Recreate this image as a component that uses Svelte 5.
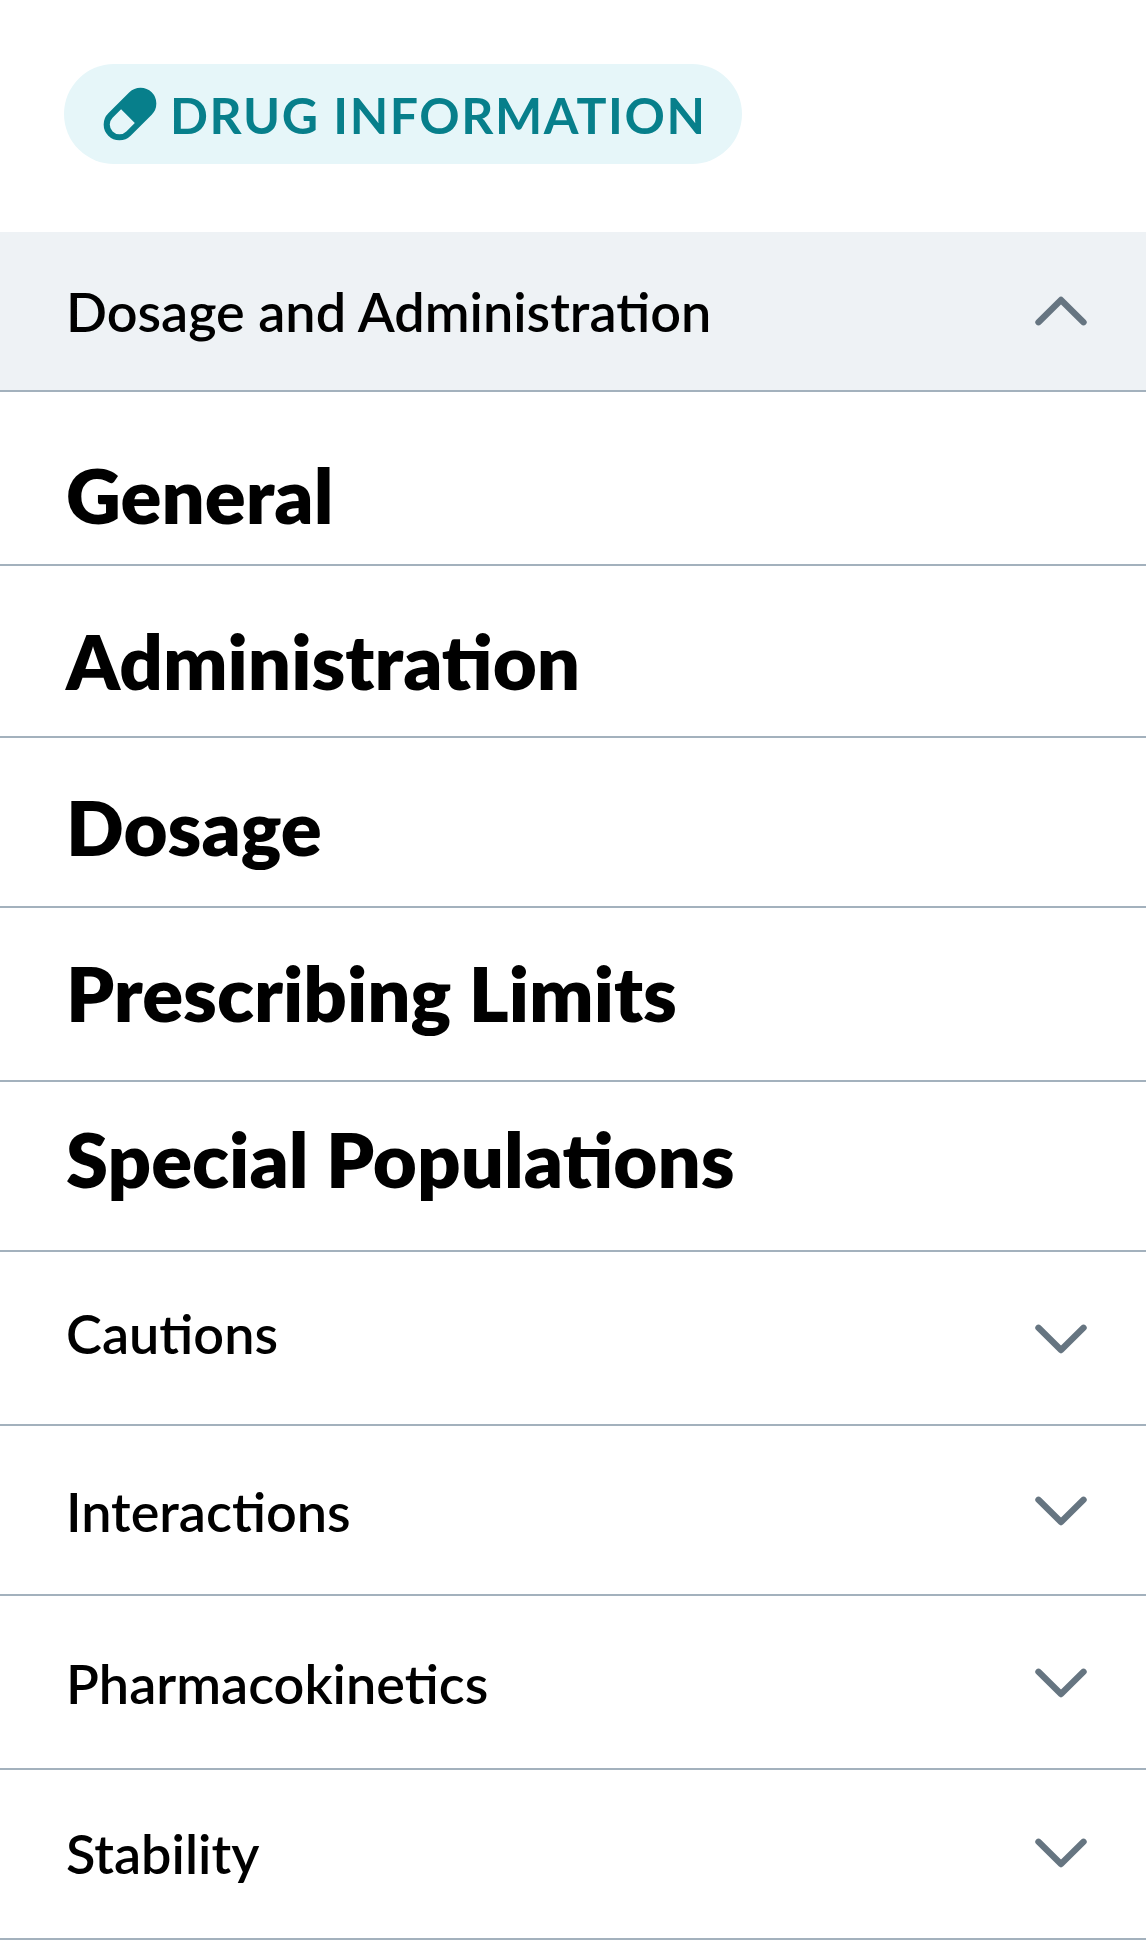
<script>
  let open = $state(true)

  // height: row height, top: label inset, icon: chevron inset
  const sections = [
    { label: 'General', height: 174, top: 56 },
    { label: 'Administration', height: 172, top: 48 },
    { label: 'Dosage', height: 170, top: 42 },
    { label: 'Prescribing Limits', height: 174, top: 38 },
    { label: 'Special Populations', height: 170, top: 30 }
  ]

  const topics = [
    { label: 'Cautions', height: 174, top: 50, icon: 71 },
    { label: 'Interactions', height: 170, top: 54, icon: 69 },
    { label: 'Pharmacokinetics', height: 174, top: 56, icon: 71 },
    { label: 'Stability', height: 170, top: 52, icon: 67 }
  ]
</script>

<main>
  <header>
    <div class="badge">
      <svg class="pill" viewBox="0 0 54 54">
        <path
          transform="rotate(45 27 27)"
          fill-rule="evenodd"
          d="M11.2 12.1a15.8 15.8 0 0 1 31.6 0v29.8a15.8 15.8 0 0 1-31.6 0zM17.3 29.9v12a9.7 9.7 0 0 0 19.4 0v-12z"
        />
      </svg>
      <span>DRUG INFORMATION</span>
    </div>
  </header>

  <button class="row active" onclick={() => (open = !open)}>
    <span class="label">Dosage and Administration</span>
    <svg class="chevron" class:flip={open} viewBox="0 0 54 32">
      <path d="M4.5 4.8 27 27 49.5 4.8" />
    </svg>
  </button>

  {#if open}
    {#each sections as section}
      <div class="row" style="height: {section.height}px; padding-top: {section.top}px">
        <h2>{section.label}</h2>
      </div>
    {/each}
  {/if}

  {#each topics as topic}
    <button class="row" style="height: {topic.height}px; padding-top: {topic.top}px">
      <span class="label">{topic.label}</span>
      <svg class="chevron" viewBox="0 0 54 32" style="margin-top: {topic.icon - topic.top}px">
        <path d="M4.5 4.8 27 27 49.5 4.8" />
      </svg>
    </button>
  {/each}
</main>

<style>
  :global(body) {
    margin: 0;
    background: #fff;
  }

  main {
    width: 1146px;
    height: 1940px;
    overflow: hidden;
    color: #000;
    font-family: Lato, sans-serif;
  }

  header {
    box-sizing: border-box;
    height: 232px;
    padding: 64px;
  }

  .badge {
    box-sizing: border-box;
    display: flex;
    align-items: center;
    width: 678px;
    height: 100px;
    padding-left: 39px;
    border-radius: 50px;
    background: #e6f6f9;
    color: #077f8b;
    font-size: 50px;
    font-weight: 700;
    letter-spacing: 1.56px;
    line-height: 60px;
    white-space: nowrap;
  }

  .badge span {
    margin-left: 13px;
    padding-top: 1px;
  }

  .pill {
    width: 54px;
    height: 54px;
    fill: currentColor;
  }

  .row {
    box-sizing: border-box;
    display: flex;
    align-items: flex-start;
    justify-content: space-between;
    width: 100%;
    margin: 0;
    padding: 0 58px 0 66px;
    border: none;
    border-bottom: 2px solid #a3b1bd;
    background: none;
    color: inherit;
    font-family: inherit;
    text-align: left;
  }

  .active {
    align-items: center;
    height: 160px;
    background: #eef2f5;
  }

  .active .label {
    padding-top: 2px;
  }

  .label {
    font-size: 54px;
    font-weight: 600;
    line-height: 64px;
    white-space: nowrap;
  }

  h2 {
    margin: 0;
    font-size: 76px;
    font-weight: 800;
    line-height: 94px;
    white-space: nowrap;
  }

  .chevron {
    width: 54px;
    height: 32px;
    fill: none;
    stroke: #667581;
    stroke-width: 6.4;
    stroke-linecap: round;
    stroke-linejoin: round;
  }

  .flip {
    transform: scaleY(-1);
  }
</style>
